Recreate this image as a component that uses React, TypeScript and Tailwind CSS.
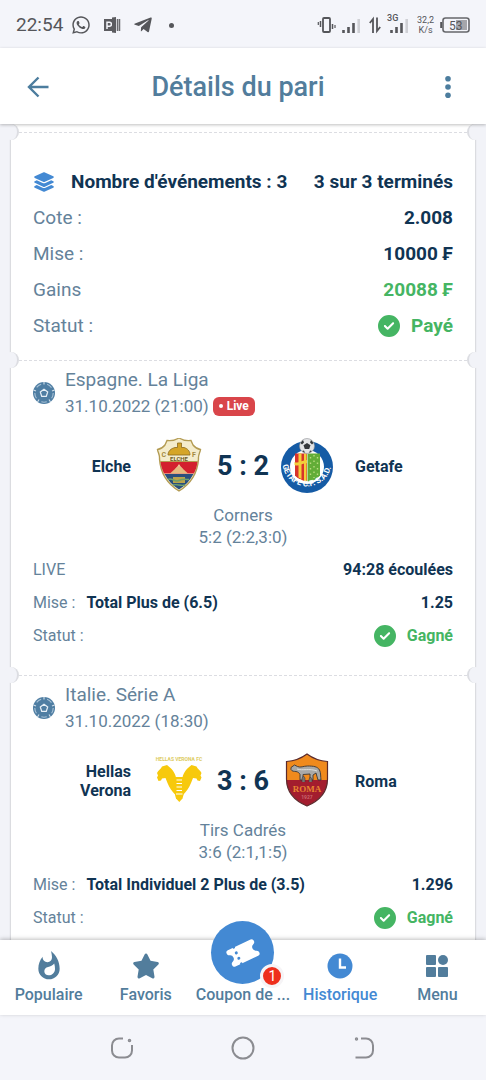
import { ReactNode } from 'react';
import { FaCircleCheck, FaLayerGroup, FaStar, FaWhatsapp } from 'react-icons/fa6';
import { FaTelegramPlane } from 'react-icons/fa';
import { MdWhatshot } from 'react-icons/md';

interface Match {
  league: string;
  date: string;
  isLive?: boolean;
  home: string;
  away: string;
  homeLogo: ReactNode;
  awayLogo: ReactNode;
  score: string;
  market: string;
  detail: string;
  elapsed?: string;
  bet: string;
  odd: string;
}

/* Status bar icons */

function PowerPointIcon() {
  return (
    <svg viewBox="0 0 18 18" className="size-[18px]" fill="none">
      <path d="M1 3h9v12H1z" fill="#5c5c60" />
      <path d="M4 13V6.200h2.400a2 2 0 0 1 0 4H4" stroke="#f4f5fa" strokeWidth="1.500" />
      <path d="m9 1.500 4-.5v16l-4-.5z" fill="#5c5c60" />
      <path d="M14.500 3v12M16.500 3v12" stroke="#6a6a6e" strokeWidth="1.500" />
    </svg>
  );
}

function VibrateIcon() {
  return (
    <svg viewBox="0 0 20 18" className="h-[18px] w-5" fill="none" stroke="#55565a">
      <rect x="6" y="2" width="7" height="14" rx="1" strokeWidth="1.800" />
      <path d="M3.500 5v6M15.500 8v5" strokeWidth="1.500" />
      <path d="M1.300 6v3M18 9v3" strokeWidth="1.200" />
    </svg>
  );
}

function SignalIcon() {
  return (
    <svg viewBox="0 0 20 18" className="h-[18px] w-5" strokeWidth="2.600" stroke="#55565a">
      <path d="M2.500 14v3M7.500 11v6M12.500 7v10" />
      <path d="M17.700 3v14" stroke="#cfd0d5" />
    </svg>
  );
}

function DataIcon() {
  return (
    <svg viewBox="0 0 12 18" className="h-[18px] w-3" fill="none" stroke="#55565a" strokeWidth="1.800">
      <path d="M4 17V3L.8 7M8 1.500V15l3.200-4" />
    </svg>
  );
}

function BatteryIcon() {
  return (
    <svg viewBox="0 0 30 16" className="h-4 w-[30px]" fill="none">
      <rect x="3" y="1" width="26" height="14" rx="2.500" stroke="#66676b" strokeWidth="1.600" />
      <path d="M1.200 5v6" stroke="#55565a" strokeWidth="2" />
      <path d="M16 3h11v10H16z" fill="#a5a6ab" />
      <text x="9" y="12.500" fontSize="12" fill="#55565a" fontFamily="Roboto, sans-serif">
        53
      </text>
    </svg>
  );
}

/* App icons */

function BackIcon() {
  return (
    <svg viewBox="0 0 24 24" className="size-6" fill="none" stroke="#4c7d9e" strokeWidth="2.400">
      <path d="M22.500 12H3M12.500 2.500 3 12l9.500 9.500" />
    </svg>
  );
}

function DotsIcon() {
  return (
    <svg viewBox="0 0 24 24" className="size-6" fill="#4c7d9e">
      <circle cx="12" cy="3.800" r="2.800" />
      <circle cx="12" cy="12" r="2.800" />
      <circle cx="12" cy="20.200" r="2.800" />
    </svg>
  );
}

function FootballIcon() {
  return (
    <svg viewBox="0 0 22 22" className="size-[22px] shrink-0" fill="none">
      <circle cx="11" cy="11" r="11" fill="#4f7ea3" />
      <circle cx="11" cy="11" r="9.200" stroke="#a9c2d6" strokeWidth="1.100" strokeDasharray="5.500 6.060" />
      <path d="m11 7.300 3.700 2.700-1.400 4.300H8.700L7.300 10z" stroke="#e6eff6" strokeWidth="1.200" />
      <path
        d="M11 0v2.500M21.500 8l-2.500 1M17.500 20l-1.500-2.500M4.500 20 6 17.500M.5 8 3 9"
        stroke="#d3e0ea"
        strokeWidth="1.100"
      />
    </svg>
  );
}

function TicketIcon() {
  return (
    <svg viewBox="0 0 36 30" className="h-[30px] w-9">
      <g transform="rotate(-25 18 15)">
        <path
          d="M5.500 6h25A2.500 2.500 0 0 1 33 8.500c0 1.500-.5 2.500-2 3a3.700 3.700 0 0 0 0 7c1.500.5 2 1.500 2 3a2.500 2.500 0 0 1-2.500 2.500h-25A2.500 2.500 0 0 1 3 21.500c0-1.500.5-2.500 2-3a3.700 3.700 0 0 0 0-7c-1.500-.5-2-1.500-2-3A2.500 2.500 0 0 1 5.500 6z"
          fill="#fff"
        />
        <circle cx="12" cy="6" r="1.300" fill="#4389d3" />
        <circle cx="12" cy="12" r="1.500" fill="#4389d3" />
        <circle cx="12" cy="18" r="1.500" fill="#4389d3" />
        <circle cx="12" cy="24" r="1.300" fill="#4389d3" />
      </g>
    </svg>
  );
}

function ClockIcon() {
  return (
    <svg viewBox="0 0 26 26" className="size-[26px]" fill="none">
      <circle cx="13" cy="13" r="12.500" fill="#4389d3" />
      <path d="M13 5.500V14.500h6" stroke="#fff" strokeWidth="2.400" />
    </svg>
  );
}

function MenuIcon() {
  return (
    <svg viewBox="0 0 24 24" className="size-6" fill="#527d9c">
      <rect x="1" y="1" width="10" height="10" rx="1" />
      <circle cx="18" cy="6" r="5" />
      <rect x="1" y="13" width="10" height="10" rx="1" />
      <rect x="13" y="13" width="10" height="10" rx="1" />
    </svg>
  );
}

/* Club crests */

function ElcheLogo() {
  return (
    <svg viewBox="0 1 46 56" className="h-14 w-[46px]">
      <path
        d="M23 1c4 2.500 8 3 12 2.500L37 8c2 2.500 4.500 4 7.500 4.500C44 16 42 18 42.500 22c-1 14-8 25-19.500 32C11.500 47 4.500 36 3.500 22 4 18 2 16 1.500 12.500 4.500 12 7 10.500 9 8l2-4.500C15 4 19 3.500 23 1z"
        fill="#f4eccb"
        stroke="#b39b52"
        strokeWidth="1.400"
      />
      <path d="M4.500 25h37c-.6 4.500-1.800 8-3.500 11.500H8C6.300 33 5 29 4.500 25z" fill="#d3202e" />
      <path d="M8.500 37h29C34 43.500 29.500 48.500 23 52.500 16.500 48.500 12 43.500 8.500 37z" fill="#2a4f7d" />
      <path d="M4.200 24.500h37.600" stroke="#b39b52" />
      <path
        d="M12 18h22c0-4-2.500-6.500-6-7.500h-2.500V6h-4v4.500H19c-4 1-7 3.500-7 7.500z"
        fill="#d5a528"
        stroke="#8b6a1c"
        strokeWidth=".8"
      />
      <path d="M20 35c-1-2-1-4 1-5l2-3 2 3c2 1 2 3 1 5z" fill="#f2c9a0" />
      <path d="M14 36.500 20 31l3-2 3 2 6 5.500z" fill="#e6ba80" />
      <path d="M17 40h12v6H17z" fill="#b9a34c" />
      <path d="M12 42.500c4-2 7 3 11 1s7-1 10-1M17 48c4-1.500 8 1.500 12 0" fill="none" stroke="#6fa06b" strokeWidth="1.500" />
      <text x="23" y="23.500" fontSize="6" fontWeight="700" textAnchor="middle" fill="#6e5a1e">
        ELCHE
      </text>
      <text x="5.500" y="20" fontSize="7" fontWeight="700" fill="#a3893e">
        C
      </text>
      <text x="36" y="20" fontSize="7" fontWeight="700" fill="#a3893e">
        F
      </text>
    </svg>
  );
}

function GetafeLogo() {
  return (
    <svg viewBox="0 0 54 56" className="h-14 w-[54px]">
      <circle cx="27" cy="29" r="26" fill="#155ba5" />
      <circle cx="27" cy="29" r="17" fill="#fff" />
      <path d="M15 15.500h12v28c-6-1-10-3-12-6z" fill="#d8332c" />
      <path d="M18.500 15.500h3v25.500l-3-1.500zM24 15.500h2.500v28l-2.500-.5z" fill="#f3cf3a" />
      <path d="M14.500 24c4 2 7-2 12.500-2v3c-5 0-8 4-12.500 2z" fill="#f3cf3a" />
      <path d="M27.500 15.500H40v22c-2.500 3.500-6.500 5.500-12.500 6z" fill="#62ad37" />
      <path
        d="M30.500 19v22M34 17v23M37.500 19v20"
        stroke="#b8db7e"
        strokeWidth="1.400"
        strokeDasharray="1.500 4"
      />
      <path id="getafe-ring" d="M2.500 26a24.600 24.600 0 0 0 49 0" fill="none" />
      <text fontSize="8" fontWeight="700" fill="#fff">
        <textPath href="#getafe-ring" startOffset="1">
          GETAFE C.F. S.A.D.
        </textPath>
      </text>
      <circle cx="27" cy="8" r="7.500" fill="#e3e4e6" stroke="#8e9196" strokeWidth=".6" />
      <path
        d="m27 5 3.500 2.200-1.300 3.800h-4.400l-1.300-3.800zM20.500 5l2.500-3 1 2.500-2 2zM33.500 5 31 2l-1 2.500 2 2zM22 13l2-.5 1 2.500zM32 13l-2-.5-1 2.500z"
        fill="#34373b"
      />
    </svg>
  );
}

function VeronaLogo() {
  return (
    <svg viewBox="0 0 48 56" className="h-14 w-12">
      <text x="24" y="8" fontSize="5" fontWeight="700" textAnchor="middle" fill="#dccb62">
        HELLAS VERONA FC
      </text>
      <path
        id="verona-wing"
        d="M12 12c4 3 8 7 9 12.500L20.500 42c-3.500-3.500-6-7-8-12L10.500 25 7 25.500 6 27.500l-2.500.5-1.500-3.500 1-2-1-2.500c1-3 4-3.500 5-6.500z"
        fill="#f7c90c"
      />
      <path
        d="M36.500 12c-4 3-8 7-9 12.500L28 42c3.500-3.500 6-7 8-12l2-5 3.500.5 1 2 2.500.5 1.500-3.500-1-2 1-2.500c-1-3-4-3.500-5-6.500z"
        fill="#f7c90c"
      />
      <path d="M20 24h8.500v18l-1 3.500-3.200 3.500-3.300-3.500-1-3.500z" fill="#f7c90c" />
      <path d="M21.500 27h5.500M21.500 30.500h5.500M21.500 34h5.500M21.500 37.500h5.500M21 41h6.500" stroke="#fff" strokeWidth="1.200" />
    </svg>
  );
}

function RomaLogo() {
  return (
    <svg viewBox="0 1 44 56" className="h-14 w-11">
      <path d="M22 2C16 6.500 9 9 1.500 9.500V28h41V9.500C35 9 28 6.500 22 2z" fill="#f08a1d" />
      <path d="M1.500 28c.5 12 8 20.500 20.500 26C34.500 48.500 42 40 42.500 28z" fill="#a31d2e" />
      <path
        d="M22 2C16 6.500 9 9 1.500 9.500V27c0 12.500 7.500 21.500 20.500 27 13-5.500 20.500-14.500 20.500-27V9.500C35 9 28 6.500 22 2z"
        fill="none"
        stroke="#5b2a2c"
        strokeWidth="1.200"
      />
      <path
        d="M6 15.500 9.500 13l3 1.500c3 1.500 6-.5 10-.5 6 0 10 .5 12 4 1.500 3 1 7 1.500 10h-3l-2-7-3 2v5h-3v-6l-7 .5v5.500h-3v-5.500c-1-2-2-2.500-4-3-2-.2-4 0-5-2z"
        fill="#a9a9a8"
        stroke="#3b3735"
        strokeWidth=".9"
      />
      <path d="M17 30v-4l1.500-2 1.500 2v4M24 30v-3l1.500-2 1.500 2v3" fill="#77736f" stroke="#3b3735" strokeWidth=".5" />
      <path d="M12 17c6 2 12-1 20 2" fill="none" stroke="#dddddc" />
      <text
        x="22"
        y="40"
        fontSize="9"
        textAnchor="middle"
        fill="#e88430"
        fontFamily="Liberation Serif, serif"
      >
        ROMA
      </text>
      <text x="22" y="46.500" fontSize="5" textAnchor="middle" fill="#c9656c">
        1927
      </text>
    </svg>
  );
}

const matches: Match[] = [
  {
    league: 'Espagne. La Liga',
    date: '31.10.2022 (21:00)',
    isLive: true,
    home: 'Elche',
    away: 'Getafe',
    homeLogo: <ElcheLogo />,
    awayLogo: <GetafeLogo />,
    score: '5 : 2',
    market: 'Corners',
    detail: '5:2 (2:2,3:0)',
    elapsed: '94:28 écoulées',
    bet: 'Total Plus de (6.5)',
    odd: '1.25',
  },
  {
    league: 'Italie. Série A',
    date: '31.10.2022 (18:30)',
    home: 'Hellas Verona',
    away: 'Roma',
    homeLogo: <VeronaLogo />,
    awayLogo: <RomaLogo />,
    score: '3 : 6',
    market: 'Tirs Cadrés',
    detail: '3:6 (2:1,1:5)',
    bet: 'Total Individuel 2 Plus de (3.5)',
    odd: '1.296',
  },
];

function StatusBar() {
  return (
    <div className="flex h-12 shrink-0 items-center justify-between bg-[#f4f5fa] px-4 pt-0.5 text-[#55565a]">
      <div className="flex items-center">
        <span className="text-[19px]">22:54</span>
        <FaWhatsapp className="ml-2 size-5" />
        <span className="ml-3">
          <PowerPointIcon />
        </span>
        <FaTelegramPlane className="ml-3 size-5" />
        <span className="ml-4 size-[5px] rounded-full bg-[#55565a]" />
      </div>
      <div className="flex items-center">
        <VibrateIcon />
        <span className="ml-1">
          <SignalIcon />
        </span>
        <span className="ml-2">
          <DataIcon />
        </span>
        <span className="relative ml-2">
          <SignalIcon />
          <span className="absolute -top-0.5 -left-0.5 text-[9px] leading-none font-medium">3G</span>
        </span>
        <span className="ml-2 text-center text-[9px] leading-[10px]">
          32,2
          <br />
          K/s
        </span>
        <span className="ml-1.5">
          <BatteryIcon />
        </span>
      </div>
    </div>
  );
}

function Header() {
  return (
    <header className="z-10 flex h-[76px] shrink-0 items-center justify-between bg-white pt-0.5 pr-4 pl-[26px] shadow-[0_1px_3px_rgba(0,0,0,0.25)]">
      <button type="button" aria-label="Retour">
        <BackIcon />
      </button>
      <h1 className="text-[27px] font-medium text-[#527d9c]">Détails du pari</h1>
      <button type="button" aria-label="Options" className="p-2.5">
        <DotsIcon />
      </button>
    </header>
  );
}

// Perforated line between two parts of the coupon
function Perforation() {
  return (
    <div className="absolute inset-x-0 top-0">
      <div className="mx-2 border-t border-dashed border-[#dcdde2]" />
      <span className="absolute -top-2 -left-2 size-4 rounded-full border-r-2 border-[#dcdde2] bg-[#f2f3f8]" />
      <span className="absolute -top-2 -right-2 size-4 rounded-full border-l-2 border-[#dcdde2] bg-[#f2f3f8]" />
    </div>
  );
}

function Status({ label }: { label: string }) {
  return (
    <span className="flex items-center gap-[11px] font-bold text-[#45b563]">
      <FaCircleCheck className="size-[22px]" />
      {label}
    </span>
  );
}

function Summary() {
  return (
    <section className="relative px-[22px] pt-8 pb-4 text-[19px] leading-9 text-[#64829a]">
      <Perforation />
      <div className="flex items-center justify-between font-bold text-[#103453]">
        <h2 className="flex items-center">
          <FaLayerGroup className="mr-4 size-[22px] text-[#4389d3]" />
          Nombre d'événements : 3
        </h2>
        <span>3 sur 3 terminés</span>
      </div>
      <div className="flex justify-between">
        <span>Cote :</span>
        <span className="font-bold text-[#103453]">2.008</span>
      </div>
      <div className="flex justify-between">
        <span>Mise :</span>
        <span className="font-bold text-[#103453]">10000 ₣</span>
      </div>
      <div className="flex justify-between">
        <span>Gains</span>
        <span className="font-bold text-[#45b563]">20088 ₣</span>
      </div>
      <div className="flex justify-between">
        <span>Statut :</span>
        <Status label="Payé" />
      </div>
    </section>
  );
}

function MatchCard({ match }: { match: Match }) {
  return (
    <section className="relative px-[22px] pt-2 pb-[23px] text-[16px] text-[#64829a]">
      <Perforation />
      <div className="flex items-center gap-[10px]">
        <FootballIcon />
        <div className="flex flex-col gap-0.5 leading-6">
          <h3 className="text-[19px]">{match.league}</h3>
          <div className="flex items-center gap-1 text-[17px]">
            <span>{match.date}</span>
            {match.isLive && (
              <span className="flex h-[19px] items-center gap-1 rounded-md bg-[#d9454a] px-1.5 text-[12px] font-bold text-white">
                <span className="size-1 rounded-full bg-white" />
                Live
              </span>
            )}
          </div>
        </div>
      </div>

      <div className="mt-[18px] flex h-[60px] items-center leading-[19px] font-bold text-[#103453]">
        <div className="flex flex-1 justify-end pr-5">
          <span className="max-w-20 text-right">{match.home}</span>
        </div>
        <div className="flex w-14 justify-center">{match.homeLogo}</div>
        <span className="w-[72px] text-center text-[27px]">{match.score}</span>
        <div className="flex w-14 justify-center">{match.awayLogo}</div>
        <span className="flex-1 pl-5">{match.away}</span>
      </div>

      <div className="mt-2 text-center text-[17px] leading-[22px]">
        <p>{match.market}</p>
        <p>{match.detail}</p>
      </div>

      <div className="mt-[5px] leading-[33px]">
        {match.elapsed && (
          <div className="flex justify-between">
            <span>LIVE</span>
            <span className="font-bold text-[#103453]">{match.elapsed}</span>
          </div>
        )}
        <div className="flex">
          <span>Mise :</span>
          <span className="ml-[11px] flex-1 font-bold text-[#103453]">{match.bet}</span>
          <span className="font-bold text-[#103453]">{match.odd}</span>
        </div>
        <div className="flex justify-between">
          <span>Statut :</span>
          <Status label="Gagné" />
        </div>
      </div>
    </section>
  );
}

function BottomNav() {
  const item = 'flex min-w-0 flex-col items-center gap-[3px]';

  return (
    <nav className="z-10 grid h-[75px] shrink-0 grid-cols-5 bg-white pt-3 text-[16px] leading-6 font-medium text-[#527d9c] shadow-[0_-1px_4px_rgba(0,0,0,0.25)]">
      <a href="#populaire" className={item}>
        <MdWhatshot className="-my-0.5 size-8" />
        Populaire
      </a>
      <a href="#favoris" className={item}>
        <FaStar className="size-7" />
        Favoris
      </a>
      <a href="#coupon" className={`relative ${item}`}>
        <span className="absolute -top-[31px] flex size-[63px] items-center justify-center rounded-full bg-[#4389d3]">
          <TicketIcon />
          <span className="absolute -right-2.5 -bottom-1 flex size-6 items-center justify-center rounded-full border-[3px] border-[#f6f4f6] bg-[#ee2f1c] text-[14px] font-normal text-white">
            1
          </span>
        </span>
        <span className="mt-[31px] whitespace-nowrap">Coupon de ...</span>
      </a>
      <a href="#historique" className={`${item} text-[#4389d3]`}>
        <span className="flex h-7 items-center">
          <ClockIcon />
        </span>
        Historique
      </a>
      <a href="#menu" className={item}>
        <span className="flex h-7 items-center">
          <MenuIcon />
        </span>
        Menu
      </a>
    </nav>
  );
}

function SystemBar() {
  return (
    <div className="flex h-[65px] shrink-0 items-center justify-center gap-[97px] bg-[#f4f5fa]">
      <button type="button" aria-label="Applications récentes">
        <svg viewBox="0 0 24 24" className="size-6" fill="none" stroke="#8b8c91" strokeWidth="2">
          <path d="M13 2.500H9a7 7 0 0 0-7 7v5a7 7 0 0 0 7 7h6a7 7 0 0 0 7-7V9" />
          <circle cx="19.500" cy="4.500" r=".8" />
        </svg>
      </button>
      <button type="button" aria-label="Accueil">
        <svg viewBox="0 0 24 24" className="size-6" fill="none" stroke="#8b8c91" strokeWidth="2">
          <circle cx="12" cy="12" r="10.500" />
        </svg>
      </button>
      <button type="button" aria-label="Précédent">
        <svg viewBox="0 0 24 24" className="size-6" fill="none" stroke="#8b8c91" strokeWidth="2">
          <path d="M9 2.500h5a7 7 0 0 1 7 7v5a7 7 0 0 1-7 7H3.500" />
          <circle cx="4.500" cy="3" r=".7" />
        </svg>
      </button>
    </div>
  );
}

export default function App() {
  return (
    <div className="flex h-screen flex-col bg-[#f2f3f8] font-[Roboto,sans-serif]">
      <StatusBar />
      <Header />
      <main className="min-h-0 flex-1 overflow-x-hidden overflow-y-auto px-[11px] [scrollbar-width:none]">
        <div className="bg-white pt-2 shadow-[0_0_2px_rgba(0,0,0,0.3)]">
          <Summary />
          {matches.map((match) => (
            <MatchCard key={match.league} match={match} />
          ))}
        </div>
      </main>
      <BottomNav />
      <SystemBar />
    </div>
  );
}
